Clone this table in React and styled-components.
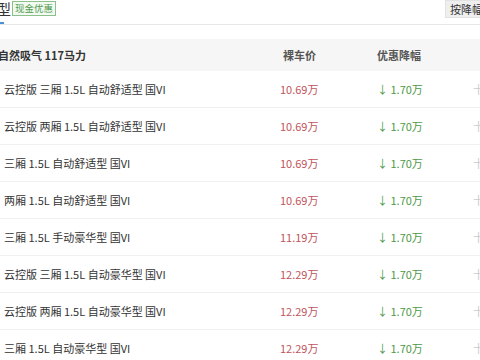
import React from 'react'
import styled, { createGlobalStyle } from 'styled-components'

const Global = createGlobalStyle`
  html, body {
    margin: 0;
    padding: 0;
    background: #fff;
    overflow: hidden;
  }
  body {
    font-family: "Noto Sans CJK SC", "Noto Sans", sans-serif;
    color: #333;
  }
`

const Page = styled.div`
  width: 480px;
  height: 360px;
  overflow: hidden;
`

const TopBar = styled.div`
  height: 24px;
  display: flex;
  align-items: flex-start;
  border-bottom: 1px solid #e8e8e8;
`

const Tab = styled.div`
  font-size: 15px;
  line-height: 18px;
  margin-left: -4px;
  margin-top: 0;
  color: #333;
  position: relative;
  &::after {
    content: '';
    position: absolute;
    left: 0;
    bottom: -6px;
    width: 8px;
    height: 2px;
    background: #4a90d9;
  }
`

const Badge = styled.span`
  margin-left: 1px;
  margin-top: 1px;
  border: 1px solid #8cc08a;
  background: #f3faf2;
  color: #4f9a4c;
  font-size: 9.5px;
  line-height: 13px;
  padding: 0 2px;
`

const SortButton = styled.div`
  margin-left: auto;
  margin-right: -8px;
  background: #efefef;
  border: 1px solid #e2e2e2;
  font-size: 11px;
  line-height: 16px;
  padding: 0 4px;
  color: #333;
`

const Gap = styled.div`
  height: 14px;
`

const Grid = styled.div`
  display: grid;
  grid-template-columns: 280px 97px 1fr 10px;
  align-items: center;
  height: ${p => (p.head ? 31 : 36)}px;
  background: ${p => (p.head ? '#f6f6f6' : '#fff')};
  border-bottom: 1px solid ${p => (p.head ? '#f6f6f6' : '#f0f0f0')};
  font-size: 11px;
`

const Name = styled.div`
  padding-left: ${p => (p.head ? 0 : 4)}px;
  margin-left: ${p => (p.head ? -2 : 0)}px;
  font-weight: ${p => (p.head ? 600 : 400)};
  color: ${p => (p.head ? '#333' : '#333')};
  white-space: nowrap;
`

const Price = styled.div`
  color: ${p => (p.head ? '#555' : '#c0535c')};
  padding-left: ${p => (p.head ? 3 : 0)}px;
  font-weight: ${p => (p.head ? 600 : 400)};
`

const Drop = styled.div`
  color: ${p => (p.head ? '#555' : '#4d9a48')};
  font-weight: ${p => (p.head ? 600 : 400)};
`

const Edge = styled.div`
  color: #ccc;
  font-size: 11px;
  text-align: right;
  margin-right: -4px;
`

const rows = [
  ['云控版 三厢 1.5L 自动舒适型 国VI', '10.69万'],
  ['云控版 两厢 1.5L 自动舒适型 国VI', '10.69万'],
  ['三厢 1.5L 自动舒适型 国VI', '10.69万'],
  ['两厢 1.5L 自动舒适型 国VI', '10.69万'],
  ['三厢 1.5L 手动豪华型 国VI', '11.19万'],
  ['云控版 三厢 1.5L 自动豪华型 国VI', '12.29万'],
  ['云控版 两厢 1.5L 自动豪华型 国VI', '12.29万'],
  ['三厢 1.5L 自动豪华型 国VI', '12.29万'],
]

export default function App() {
  return (
    <Page>
      <Global />
      <TopBar>
        <Tab>型</Tab>
        <Badge>现金优惠</Badge>
        <SortButton>按降幅</SortButton>
      </TopBar>
      <Gap />
      <Grid head>
        <Name head>自然吸气 117马力</Name>
        <Price head>裸车价</Price>
        <Drop head>优惠降幅</Drop>
        <Edge />
      </Grid>
      {rows.map(([name, price], i) => (
        <Grid key={i}>
          <Name>{name}</Name>
          <Price>{price}</Price>
          <Drop>↓ 1.70万</Drop>
          <Edge>十</Edge>
        </Grid>
      ))}
    </Page>
  )
}
